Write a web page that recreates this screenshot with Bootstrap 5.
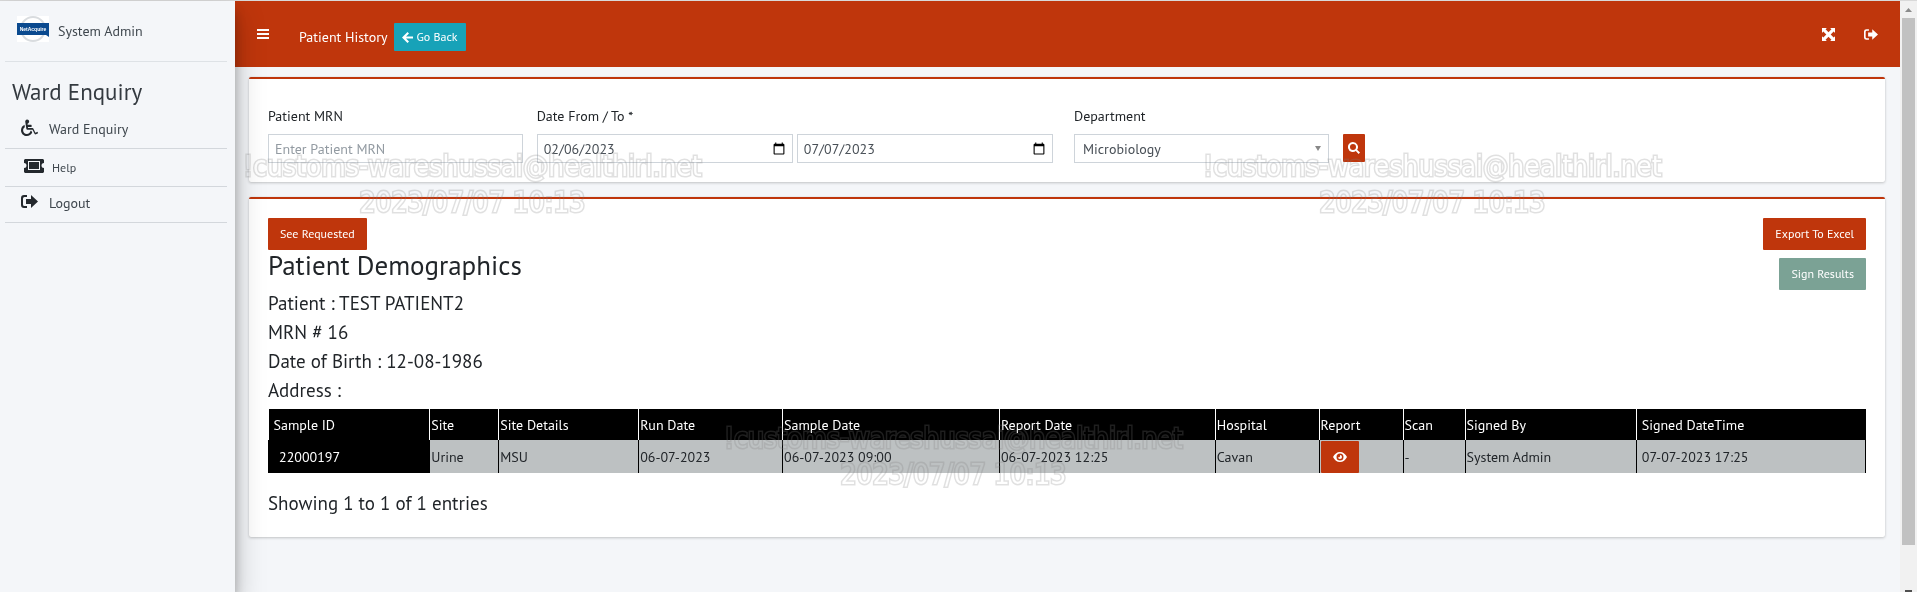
<!DOCTYPE html>
<html lang="en">
<head>
<meta charset="utf-8">
<meta name="viewport" content="width=device-width, initial-scale=1">
<title>Patient History</title>
<link rel="stylesheet" href="https://cdn.jsdelivr.net/npm/bootstrap@5.3.0/dist/css/bootstrap.min.css">
<style>
:root { --brand: #bf360c; --page: #f4f6f9; --ink: #212529; }
body { font-family: "PT Sans", Lato, "Open Sans", sans-serif; font-size: 14px; line-height: 20px; color: var(--ink); background: var(--page); }
svg { fill: currentColor; display: block; }
.app-shell { min-height: 100vh; border-top: 1px solid #d9d9d9; background: var(--page); }
.side-menu { width: 235px; background: var(--page); color: #343a40; box-shadow: 0 14px 28px rgba(0,0,0,.25), 0 10px 10px rgba(0,0,0,.22); z-index: 2; padding: 0 8px 0 5px; }
.side-menu a { color: #3f474e; text-decoration: none; }
.user-panel { height: 61px; border-bottom: 1px solid #dee2e6; padding: 0 0 0 12px; gap: 9px; }
.user-panel svg { margin-bottom: 5px; }
.side-title { font-size: 23px; line-height: 28px; margin: 16px 0 0 7px; }
.side-link { border-bottom: 1px solid #d3d7dc; height: 38px; padding-left: 16px; gap: 11px; }
.side-link.first { height: 43px; padding-top: 4px; }
.side-link.last { height: 36px; padding-bottom: 3px; }
.side-link svg { color: #23282d; margin-bottom: 3px; }
.side-link.help { font-size: 12px; padding-left: 19px; gap: 8px; }
.top-bar { height: 66px; background: var(--brand); color: #fff; padding: 0 22px; }
.top-bar .plain { color: #fff; background: none; border: 0; padding: 0; }
.crumb { padding: 6px 0 0 30px; gap: 7px; }
.top-tools { gap: 29px; }
.btn { border-radius: 1px; font-size: 12px; line-height: 18px; border: 0; }
.btn-brand, .btn-brand:hover { background: var(--brand); color: #fff; }
.btn-back, .btn-back:hover { background: #17a2b8; color: #fff; padding: 5px 8px; gap: 3px; }
.btn-sign, .btn-sign:hover { background: #7ba295; color: #fff; }
.btn-wide { padding: 7px 12px; }
.btn-find { width: 22px; height: 28px; margin-bottom: 1px; }
.panel { background: #fff; border-top: 2px solid var(--brand); border-radius: 2px; box-shadow: 0 0 1px rgba(0,0,0,.13), 0 1px 3px rgba(0,0,0,.2); }
.page-body { padding: 10px 15px 0 14px; }
.search-panel { padding: 27px 12px 19px; }
.search-panel .row { --bs-gutter-x: 14px; margin: 0; }
.search-panel label { margin-bottom: 8px; }
.form-control, .form-select { font-size: 14px; line-height: 20px; height: 29px; padding: 3px 6px; border: 1px solid #ced4da; border-radius: 0; color: #495057; }
.form-control::placeholder { color: #939ba2; }
.form-select { padding-left: 8px; background-image: url("data:image/svg+xml,%3Csvg xmlns='http://www.w3.org/2000/svg' viewBox='0 0 8 6'%3E%3Cpath fill='%23888' d='M1 0h6L4 5z'/%3E%3C/svg%3E"); background-size: 8px 6px; background-position: right 6px center; }
.date-pair { gap: 4px; padding-right: 7px; }
.date-pair input { padding-right: 4px; }
.result-panel { margin-top: 15px; padding: 19px 19px 17px; }
.demo-title { font-size: 27px; line-height: 31px; margin: 0 0 10px; }
.demo-line { font-size: 19px; line-height: 24px; margin: 0 0 5px; font-weight: 400; }
.results { table-layout: fixed; width: 100%; border-collapse: collapse; margin: 2px 0 18px; }
.results th { background: #000; color: #fff; font-weight: 400; height: 31px; padding: 0 1px; border-left: 1px solid #fff; }
.results td { background: #bdc1c2; height: 33px; padding: 0 1px; border-left: 1px solid #000; border-right: 1px solid #000; }
.results th:first-child { padding-left: 5px; border-left: 0; }
.results td:first-child { background: #000; color: #fff; padding-left: 10px; }
.results th:last-child, .results td:last-child { padding-left: 5px; }
.btn-eye { padding: 9px 12px; height: 32px; }
.stamp { position: absolute; text-align: center; font-family: "DejaVu Sans Condensed", "DejaVu Sans", sans-serif; font-stretch: condensed; font-size: 28px; line-height: 36px; color: #000; -webkit-text-stroke: 3px #1f1f1f; paint-order: stroke fill; mix-blend-mode: exclusion; pointer-events: none; z-index: 5; white-space: nowrap; }
.stamp-a { left: 243px; top: 149px; } .stamp-b { left: 1203px; top: 149px; } .stamp-c { left: 724px; top: 421px; }
.scroll-track { width: 17px; background: #f1f1f1; }
.scroll-thumb { width: 13px; background: #c1c1c1; height: 89vh; }
</style>
</head>
<body class="position-relative">
<div class="app-shell d-flex">
  <aside class="side-menu flex-shrink-0 position-relative">
    <div class="user-panel d-flex align-items-center">
      <svg width="32" height="26" viewBox="0 0 32 26" role="img" aria-label="NetAcquire"><rect width="32" height="26" fill="#fff"/><circle cx="16" cy="13" r="12" fill="none" stroke="#d9dcdf" stroke-width="2"/><path d="M0 7h32v14l-3-2H0z" fill="#0b4a8f"/><text x="16" y="15" text-anchor="middle" font-size="5" font-weight="700" fill="#fff" font-family="Liberation Sans, sans-serif">NetAcquire</text></svg>
      <a href="#">System Admin</a>
    </div>
    <h2 class="side-title fw-normal">Ward Enquiry</h2>
    <nav>
      <a href="#" class="side-link first d-flex align-items-center"><svg width="17" height="17" viewBox="0 0 512 512"><path d="M496 385l14 29c4 8 1 17-7 21l-53 27c-16 8-35 1-43-15l-61-127H192c-16 0-30-12-32-28L128 80c-3-25 12-49 36-58 45-16 89 22 80 68-5 25-24 44-48 50l4 36h104c9 0 16 7 16 16v32c0 9-7 16-16 16h-96l4 32h134c12 0 24 7 29 18l58 123 35-17c8-4 18-1 28-11zM311 352l27 55c-29 62-91 105-162 105C79 512 0 433 0 336c0-73 44-135 107-162l9 72c-31 19-52 52-52 90 0 62 50 112 112 112 57 0 104-42 111-96z"/></svg>Ward Enquiry</a>
      <a href="#" class="side-link help d-flex align-items-center"><svg width="20" height="14" viewBox="0 0 20 14"><path fill-rule="evenodd" d="M1 0h18l1 1v3a2 2 0 0 0 0 5v4l-1 1H1l-1-1V9a2 2 0 0 0 0-5V1zM4 2v9h12V2zM5 3h10v7H5z"/></svg>Help</a>
      <a href="#" class="side-link last d-flex align-items-center"><svg width="17" height="14" viewBox="0 0 17 14"><path d="M6 0v2H3.500Q2 2 2 3.500v6Q2 11 3.500 11H6v2H3Q0 13 0 10V3Q0 0 3 0zM10 0l7 6.500-7 6.500V9H5V4h5z"/></svg>Logout</a>
    </nav>
  </aside>
  <div class="flex-grow-1">
    <header class="top-bar d-flex align-items-center">
      <button class="plain" aria-label="Toggle menu"><svg width="12" height="12" viewBox="0 0 12 12"><path d="M0 1h12v2H0zM0 5h12v2H0zM0 9h12v2H0z"/></svg></button>
      <div class="crumb d-flex align-items-center">
        <span>Patient History</span>
        <button class="btn btn-back d-flex align-items-center"><svg width="11" height="11" viewBox="0 0 11 11"><path d="M5.500 0L7 1.500 4 4.500h7v2H4l3 3L5.500 11 0 5.500z"/></svg>Go Back</button>
      </div>
      <div class="top-tools d-flex align-items-center ms-auto">
        <button class="plain" aria-label="Full screen"><svg width="13" height="13" viewBox="0 0 12 12"><path d="M0 0h4.500L3.300 1.200 6 4l2.700-2.800L7.500 0H12v4.500l-1.200-1.200L8 6l2.800 2.700L12 7.500V12H7.500l1.200-1.200L6 8l-2.700 2.800L4.500 12H0V7.500l1.200 1.200L4 6 1.200 3.300 0 4.500z"/></svg></button>
        <a href="#" class="plain" aria-label="Log out"><svg width="14" height="11" viewBox="0 0 17 13"><path d="M6 0v2H3.500Q2 2 2 3.500v6Q2 11 3.500 11H6v2H3Q0 13 0 10V3Q0 0 3 0zM10 0l7 6.500-7 6.500V9H5V4h5z"/></svg></a>
      </div>
    </header>
    <main class="page-body">
      <form class="panel search-panel">
        <div class="row align-items-end">
          <div class="col-2"><label for="mrn">Patient MRN</label><input id="mrn" class="form-control" placeholder="Enter Patient MRN"></div>
          <div class="col-4"><label for="from">Date From / To *</label>
            <div class="date-pair d-flex"><input id="from" type="date" class="form-control" value="2023-02-06"><input type="date" aria-label="Date to" class="form-control" value="2023-07-07"></div></div>
          <div class="col-2"><label for="dept">Department</label><select id="dept" class="form-select"><option>Microbiology</option></select></div>
          <div class="col-auto"><button type="button" class="btn btn-brand btn-find p-0 d-flex align-items-center justify-content-center" aria-label="Search"><svg width="12" height="12" viewBox="0 0 12 12"><path fill-rule="evenodd" d="M5 0a5 5 0 0 1 4.100 7.800L12 10.600 10.600 12 7.800 9.100A5 5 0 1 1 5 0zm0 2a3 3 0 1 0 0 6 3 3 0 0 0 0-6z"/></svg></button></div>
        </div>
      </form>
      <section class="panel result-panel">
        <div class="d-flex justify-content-between align-items-start">
          <div>
            <button class="btn btn-brand btn-wide">See Requested</button>
            <h1 class="demo-title fw-normal">Patient Demographics</h1>
            <p class="demo-line">Patient : TEST PATIENT2</p>
            <p class="demo-line">MRN # 16</p>
            <p class="demo-line">Date of Birth : 12-08-1986</p>
            <p class="demo-line">Address :</p>
          </div>
          <div class="d-flex flex-column align-items-end gap-2">
            <button class="btn btn-brand btn-wide">Export To Excel</button>
            <button class="btn btn-sign btn-wide">Sign Results</button>
          </div>
        </div>
        <table class="results">
          <colgroup><col style="width:10.1%"><col style="width:4.32%"><col style="width:8.76%"><col style="width:9.01%"><col style="width:13.58%"><col style="width:13.52%"><col style="width:6.5%"><col style="width:5.26%"><col style="width:3.88%"><col style="width:10.72%"><col></colgroup>
          <thead><tr><th>Sample ID</th><th>Site</th><th>Site Details</th><th>Run Date</th><th>Sample Date</th><th>Report Date</th><th>Hospital</th><th>Report</th><th>Scan</th><th>Signed By</th><th>Signed DateTime</th></tr></thead>
          <tbody><tr><td>22000197</td><td>Urine</td><td>MSU</td><td>06-07-2023</td><td>06-07-2023 09:00</td><td>06-07-2023 12:25</td><td>Cavan</td><td><button class="btn btn-brand btn-eye d-block" aria-label="View report"><svg width="14" height="10" viewBox="0 0 14 10"><path fill-rule="evenodd" d="M7 0c3 0 5.500 2 7 5-1.500 3-4 5-7 5S1.500 8 0 5c1.500-3 4-5 7-5zm0 1.500a3.500 3.500 0 1 0 0 7 3.500 3.500 0 0 0 0-7zM7 3a2 2 0 1 1-2 2l1 .5L7 4.500z"/></svg></button></td><td>-</td><td>System Admin</td><td>07-07-2023 17:25</td></tr></tbody>
        </table>
        <p class="demo-line">Showing 1 to 1 of 1 entries</p>
      </section>
    </main>
  </div>
  <div class="scroll-track flex-shrink-0 d-flex flex-column align-items-center" aria-hidden="true">
    <svg width="17" height="17" viewBox="0 0 17 17"><path fill="#8b8b8b" d="M5 11l3.500-4L12 11z"/></svg>
    <div class="scroll-thumb"></div>
    <svg class="mt-auto" width="7" height="2" viewBox="0 0 7 2"><path fill="#505050" d="M0 0h7v2H0z"/></svg>
  </div>
</div>
<div class="stamp stamp-a" aria-hidden="true">!customs-wareshussai@healthirl.net<br>2023/07/07 10:13</div>
<div class="stamp stamp-b" aria-hidden="true">!customs-wareshussai@healthirl.net<br>2023/07/07 10:13</div>
<div class="stamp stamp-c" aria-hidden="true">!customs-wareshussai@healthirl.net<br>2023/07/07 10:13</div>
<script src="https://cdn.jsdelivr.net/npm/bootstrap@5.3.0/dist/js/bootstrap.bundle.min.js"></script>
</body>
</html>
